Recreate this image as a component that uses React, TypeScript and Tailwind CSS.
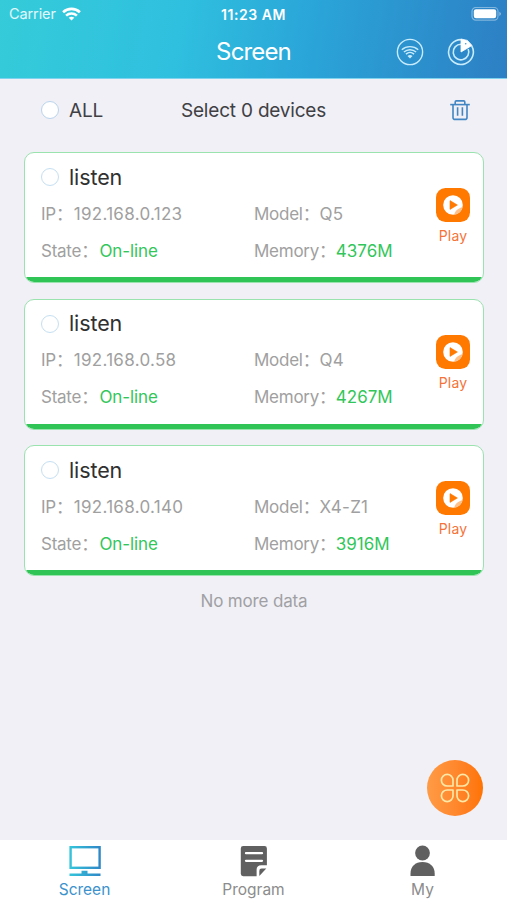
import clsx from "clsx";

// ── Data ─────────────────────────────────────────────────────────────────────

interface Device {
    name: string;
    ip: string;
    model: string;
    memory: string;
}

const devices: Device[] = [
    { name: "listen", ip: "192.168.0.123", model: "Q5", memory: "4376M" },
    { name: "listen", ip: "192.168.0.58", model: "Q4", memory: "4267M" },
    { name: "listen", ip: "192.168.0.140", model: "X4-Z1", memory: "3916M" },
];

// ── Icons ────────────────────────────────────────────────────────────────────

function StatusWifi() {
    return (
        <svg width="19" height="15" viewBox="0 0 19 15" fill="none" stroke="#fff" strokeWidth="2.6">
            <path d="M1.1 5.2C5.7 0.7 13.3 0.7 17.9 5.2" />
            <path d="M4.1 8.6C7.2 5.8 11.8 5.8 14.9 8.6" />
            <path d="M6.7 10.7C8.4 9.3 10.6 9.3 12.3 10.7L9.5 13.6Z" fill="#fff" stroke="none" />
        </svg>
    );
}

function Battery() {
    return (
        <svg width="31" height="15" viewBox="0 0 31 15">
            <rect x="1" y="0.5" width="26" height="12.6" rx="3.8" fill="none" stroke="#fff" strokeOpacity="0.4" strokeWidth="1.2" />
            <rect x="2.8" y="2.3" width="22.4" height="9" rx="2.2" fill="#fff" />
            <path d="M28.4 4.7C30.4 5.5 30.4 8.1 28.4 8.9Z" fill="#fff" fillOpacity="0.5" />
        </svg>
    );
}

function WifiRing() {
    return (
        <svg width="28" height="28" viewBox="0 0 28 28" fill="none" stroke="#c8ecfb" strokeWidth="1.4">
            <circle cx="14" cy="14" r="12.6" />
            <path d="M5.8 11.8C10.4 7.6 17.6 7.6 22.2 11.8" />
            <path d="M7.9 14C11.4 10.9 16.6 10.9 20.1 14" />
            <path d="M9.9 16.1C12.3 14.1 15.7 14.1 18.1 16.1" />
            <path d="M11.5 17.9C13 16.8 15 16.8 16.5 17.9L14 20.4Z" fill="#c8ecfb" stroke="none" />
        </svg>
    );
}

function Radar() {
    return (
        <svg width="28" height="28" viewBox="0 0 28 28" fill="none" stroke="#c8ecfb" strokeWidth="1.6">
            <path d="M14 1.6A12.4 12.4 0 1 0 24.7 7.8" />
            <path d="M14 6.2A7.8 7.8 0 1 0 21.2 11" />
            <path d="M14 14V1L20.4 2.4L25 7.4Z" fill="#fff" stroke="#fff" strokeWidth="0.8" strokeLinejoin="round" />
            <circle cx="18.7" cy="5.8" r="0.8" fill="#4199d3" stroke="none" />
        </svg>
    );
}

function Trash() {
    return (
        <svg width="20" height="21" viewBox="0 0 20 21" fill="none" stroke="#4286c3" strokeWidth="1.6">
            <path d="M0.2 4.6H19.8" />
            <path d="M5.2 4.4V2Q5.2 0.9 6.3 0.9H13.7Q14.8 0.9 14.8 2V4.4" />
            <path d="M3 5V17.4Q3 19.4 5.2 19.4H14.8Q17 19.4 17 17.4V5" />
            <path d="M7.6 7.2V15.8M12.4 7.2V15.8" />
        </svg>
    );
}

function PlayBadge() {
    return (
        <svg width="34" height="34" viewBox="0 0 34 34">
            <rect width="34" height="34" rx="9.5" fill="#ff7800" />
            <circle cx="17" cy="17" r="9.8" fill="#fff" />
            <path d="M14 12.6V21.4L21.4 17Z" fill="#ff7800" stroke="#ff7800" strokeWidth="0.6" strokeLinejoin="round" />
            <path d="M18.2 26.7C19 22.8 22.4 19.9 26.6 19.2A9.8 9.8 0 0 1 18.2 26.7Z" fill="#ffc08a" />
        </svg>
    );
}

function Clover() {
    return (
        <svg width="30" height="30" viewBox="0 0 30 30" fill="none" stroke="#ffe7a6" strokeWidth="1.7" strokeLinejoin="round">
            <path d="M13 13H7.2A5.8 5.8 0 1 1 13 7.2Z" />
            <path d="M17 13V7.2A5.8 5.8 0 1 1 22.8 13Z" />
            <path d="M13 17V22.8A5.8 5.8 0 1 1 7.2 17Z" />
            <path d="M17 17H22.8A5.8 5.8 0 1 1 17 22.8Z" />
        </svg>
    );
}

function MonitorIcon() {
    return (
        <svg width="32" height="32" viewBox="0 0 32 32">
            <defs>
                <linearGradient id="monitor" gradientUnits="userSpaceOnUse" x1="0" y1="0" x2="32" y2="0">
                    <stop offset="0" stopColor="#35c6db" />
                    <stop offset="1" stopColor="#2f86c6" />
                </linearGradient>
            </defs>
            <rect x="1.6" y="2.2" width="29" height="20.6" fill="none" stroke="url(#monitor)" strokeWidth="2.4" />
            <path d="M0.5 28.4H12.5V25.8H18.5V28.4H31.5V31H0.5Z" fill="url(#monitor)" />
        </svg>
    );
}

function ProgramIcon() {
    return (
        <svg width="28" height="32" viewBox="0 0 28 32" fill="#606060">
            <path d="M3.2 1H24.5Q26.9 1 26.9 3.4V20.2H21.2Q16.6 20.2 16.6 24.8V31.2H3.2Q0.8 31.2 0.8 28.8V3.4Q0.8 1 3.2 1Z" />
            <path d="M19.3 31V26Q19.3 23.6 21.7 23.6H26.3Z" />
            <path d="M6 8.2H22M6 15.8H22" stroke="#fff" strokeWidth="2.3" strokeLinecap="round" />
        </svg>
    );
}

function PersonIcon() {
    return (
        <svg width="26" height="32" viewBox="0 0 26 32" fill="#606060">
            <circle cx="12.5" cy="8" r="7.4" />
            <path d="M0.5 31V28.5C0.5 21.5 5.2 17 12.5 17S24.7 21.5 24.7 28.5V31Z" />
        </svg>
    );
}

// ── Pieces ───────────────────────────────────────────────────────────────────

function Radio({ className }: { className?: string }) {
    return <span className={clsx("size-[18px] shrink-0 rounded-full border bg-white", className)} />;
}

function Field({ label, value, className }: { label: string; value: string; className?: string }) {
    return (
        <div className="flex h-6 items-center whitespace-pre text-[#a0a0a0]">
            <span>{label}：</span>
            <span className={className}>{value}</span>
        </div>
    );
}

function DeviceCard({ device }: { device: Device }) {
    return (
        <div className="flex h-[131px] flex-col overflow-hidden rounded-[10px] border border-[#9ae2ae] bg-white">
            <div className="flex flex-1 pl-4">
                <div className="w-[388px] pt-2">
                    <div className="flex h-8 items-center gap-[10px]">
                        <Radio className="border-[#c5dff2]" />
                        <span className="text-[21.5px] tracking-[-0.1px] text-[#303030]">{device.name}</span>
                    </div>
                    <div className="mt-[9.5px] grid grid-cols-[213px_1fr] gap-y-[13px] text-[17px] tracking-[-0.25px]">
                        <Field label="IP" value={device.ip} className="pl-px tracking-[0.3px]" />
                        <Field label="Model" value={device.model} className="tracking-[0.3px]" />
                        <Field label="State" value="On-line" className="pl-[1.5px] tracking-[-0.1px] text-[#32c65a]" />
                        <Field label="Memory" value={device.memory} className="tracking-normal text-[#32c65a]" />
                    </div>
                </div>
                <button className="flex w-12 flex-col items-center pt-[35px]">
                    <PlayBadge />
                    <span className="mt-1 text-[14px] leading-5 tracking-[0.15px] text-[#f5733a]">Play</span>
                </button>
            </div>
            <div className="h-[5px] bg-[#30c457]" />
        </div>
    );
}

// ── Screen ───────────────────────────────────────────────────────────────────

export default function App() {
    return (
        <div className="relative flex h-[900px] w-[507px] flex-col overflow-hidden bg-[#f0f0f6] font-['Inter','Noto_Sans_CJK_SC',sans-serif]">
            <header className="h-[79px] shrink-0 border-b border-[#7fd3ee] bg-[linear-gradient(100deg,#35cbd9_0%,#2fc0df_35%,#2aa4d8_62%,#2d7fc4_100%)] text-white">
                <div className="grid h-7 grid-cols-3 items-center pl-[5px] pr-[5px]">
                    <div className="flex items-center gap-[6px] pl-1 text-[14.5px] tracking-[-0.1px] text-white/85">
                        Carrier
                        <StatusWifi />
                    </div>
                    <span className="text-center text-[14px] font-semibold tracking-[0.55px]">11:23 AM</span>
                    <span className="flex justify-end"><Battery /></span>
                </div>
                <div className="grid h-12 grid-cols-[1fr_auto_1fr] items-center pr-8">
                    <span />
                    <h1 className="pl-8 text-[24px] tracking-[-0.85px]">Screen</h1>
                    <div className="flex justify-end gap-[23px]">
                        <WifiRing />
                        <Radar />
                    </div>
                </div>
            </header>

            <main className="flex-1 pl-6 pr-[23px]">
                <div className="flex h-[62px] items-center pl-[17px] pr-[14px] text-[19px] text-[#404044]">
                    <Radio className="border-[#b9d4ec]" />
                    <span className="ml-[10px] w-[112px] pt-0.5 tracking-[-0.2px]">ALL</span>
                    <span className="flex-1 pt-0.5 tracking-[-0.2px]">Select 0 devices</span>
                    <Trash />
                </div>
                <div className="mt-[11px] flex flex-col gap-[15.5px]">
                    {devices.map((d) => (
                        <DeviceCard key={d.ip} device={d} />
                    ))}
                </div>
                <p className="mt-[13px] text-center text-[17px] tracking-[-0.15px] text-[#a0a0a4]">No more data</p>
            </main>

            {/* Floating menu button */}
            <button className="absolute left-[427px] top-[760px] flex size-14 items-center justify-center rounded-full bg-linear-to-r from-[#ff9b45] to-[#ff7300]">
                <Clover />
            </button>

            <nav className="grid h-[60px] shrink-0 grid-cols-3 bg-white text-[15.5px] leading-5 text-[#8c8c8c]">
                <div className="flex flex-col items-center gap-[3px] pt-[5px] text-[#3c92cc]">
                    <MonitorIcon />
                    Screen
                </div>
                <div className="flex flex-col items-center gap-[3px] pt-[5px]">
                    <ProgramIcon />
                    Program
                </div>
                <div className="flex flex-col items-center gap-[3px] pt-[5px]">
                    <PersonIcon />
                    My
                </div>
            </nav>
        </div>
    );
}
